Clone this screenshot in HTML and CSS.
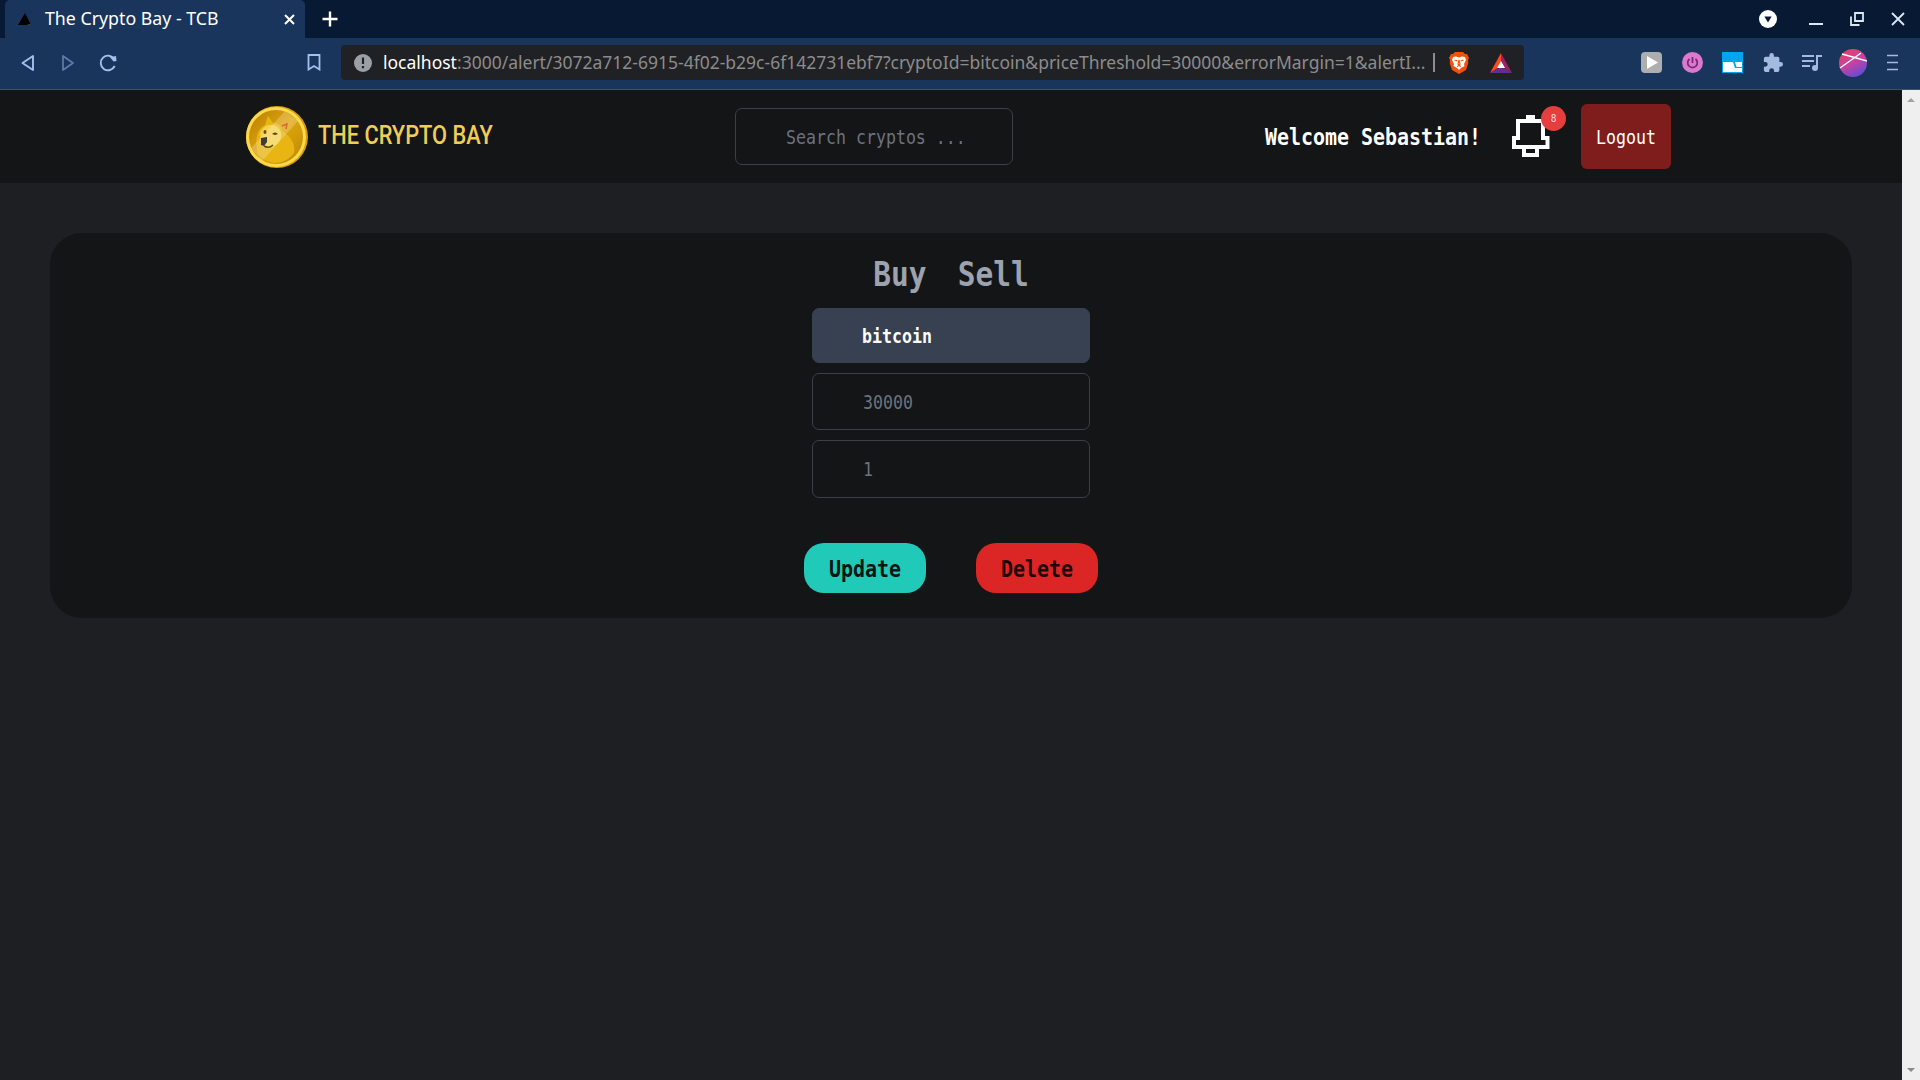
FILE: index.html
```html
<!DOCTYPE html>
<html lang="en">
<head>
<meta charset="utf-8">
<title>The Crypto Bay - TCB</title>
<link rel="stylesheet" href="styles.css">
</head>
<body>
<div class="tabs">
  <div class="tab">
    <svg class="favicon" width="16" height="14" viewBox="0 0 16 14"><path d="M8 1l6 12H1z" fill="#000"/><path d="M12 12l3 1h-5z" fill="#4a4a52"/></svg>
    <span class="tab-title">The Crypto Bay - TCB</span>
    <svg class="close" width="11" height="11" viewBox="0 0 11 11"><path d="M1 1l9 9M10 1l-9 9" stroke="#fff" stroke-width="2"/></svg>
  </div>
  <svg class="plus" width="16" height="16" viewBox="0 0 16 16"><path d="M8 .5v15M.5 8h15" stroke="#fff" stroke-width="2.4"/></svg>
  <div class="window-controls">
    <svg width="18" height="18" viewBox="0 0 18 18"><circle cx="9" cy="9" r="9" fill="#fff"/><path d="M5.3 6.5h7.4L9 12.5z" fill="#081a33"/></svg>
    <svg width="14" height="14" viewBox="0 0 14 14"><path d="M0 12h14" stroke="#dce6f5" stroke-width="2"/></svg>
    <svg width="14" height="14" viewBox="0 0 14 14" fill="none" stroke="#dce6f5" stroke-width="1.8"><path d="M5 1h8v8H5zM1 4.5V13h8.5"/></svg>
    <svg width="14" height="14" viewBox="0 0 14 14"><path d="M1 1l12 12M13 1L1 13" stroke="#dce6f5" stroke-width="1.8"/></svg>
  </div>
</div>
<div class="toolbar">
  <div class="nav">
    <svg width="14" height="18" viewBox="0 0 14 18"><path d="M12 2v14L1.5 9z" fill="none" stroke="#a3c0ee" stroke-width="1.9" stroke-linejoin="round"/></svg>
    <svg width="14" height="18" viewBox="0 0 14 18"><path d="M2 2v14l10-7z" fill="none" stroke="#5f7da8" stroke-width="1.7" stroke-linejoin="round"/></svg>
    <svg width="18" height="18" viewBox="0 0 18 18"><path d="M15.2 5A7.3 7.3 0 1 0 15.7 12" fill="none" stroke="#a3c0ee" stroke-width="1.9"/><path d="M11 3.2l6-1.2.5 5-3 .5z" fill="#a3c0ee"/></svg>
  </div>
  <svg class="bookmark" width="14" height="17" viewBox="0 0 14 17"><path d="M1.5 1h11v14.5L7 12l-5.500 3.500z" fill="none" stroke="#a3c0ee" stroke-width="1.8"/></svg>
  <div class="address">
    <svg width="18" height="18" viewBox="0 0 18 18"><circle cx="9" cy="9" r="9" fill="#9aa0a6"/><path d="M9 3.500v6.500M9 12v2.300" stroke="#202124" stroke-width="2.200"/></svg>
    <span class="url"><b>localhost</b>:3000/alert/3072a712-6915-4f02-b29c-6f142731ebf7?cryptoId=bitcoin&amp;priceThreshold=30000&amp;errorMargin=1&amp;alertI...</span>
    <i class="divider"></i>
    <svg class="shield" width="20" height="22" viewBox="0 0 20 22"><path d="M6 0h8l2 2 2 0 2 4-1 2 .3 3L17 18l-7 4-7-4L.7 11 1 8 0 6l2-4h2z" fill="#f0520b"/><path d="M4 5l3-.5 3 1 3-1 3 .5 1 3-2 4 .5 2-3.500 2L10 18l-2-2-3.500-2 .5-2-2-4z" fill="#fff"/><path d="M5.500 8l3 1M14.500 8l-3 1M10 8l-1 4 1 1 1-1zM8 14.500l2-1 2 1" fill="none" stroke="#f0520b" stroke-width="1.100"/></svg>
    <svg class="bat" width="22" height="20" viewBox="0 0 22 20"><path d="M11 0L0 20l11-7z" fill="#ff4724"/><path d="M11 0l11 20-11-7z" fill="#9e1f63"/><path d="M0 20h22l-11-7z" fill="#662d91"/><path d="M11 8l4 7H7z" fill="#fff"/></svg>
  </div>
  <div class="extensions">
    <svg width="21" height="21" viewBox="0 0 21 21"><rect width="21" height="21" rx="4" fill="#acaeb0"/><path d="M6 4l11 6.500L6 17z" fill="#fff"/></svg>
    <svg width="21" height="21" viewBox="0 0 21 21"><circle cx="10.500" cy="10.500" r="10.500" fill="#dc78d0"/><path d="M7.500 7a4.800 4.800 0 1 0 6 0M10.500 5v6" fill="none" stroke="#74296f" stroke-width="1.700"/></svg>
    <svg width="21" height="21" viewBox="0 0 21 21"><path fill="#00a5f2" d="M0 0h21v21H0z"/><path d="M1 10h10l2 6h7v4H1z" fill="#fff"/><path d="M13 10h7v5h-5.500z" fill="#fff"/></svg>
    <svg width="20" height="20" viewBox="1 1 22 22"><path fill="#a3bbe0" d="M20.500 11H19V7a2 2 0 0 0-2-2h-4V3.500a2.500 2.500 0 0 0-5 0V5H4a2 2 0 0 0-2 2v3.800h1.500a2.700 2.700 0 0 1 0 5.400H2V20a2 2 0 0 0 2 2h3.800v-1.500a2.700 2.700 0 0 1 5.400 0V22H17a2 2 0 0 0 2-2v-4h1.500a2.500 2.500 0 0 0 0-5z"/></svg>
    <svg width="20" height="18" viewBox="0 0 20 18"><path d="M0 2h12M0 7h12M0 12h8" stroke="#a3bbe0" stroke-width="2"/><path d="M15 14V2h5" fill="none" stroke="#a3bbe0" stroke-width="2"/><circle cx="13" cy="14" r="3" fill="#a3bbe0"/></svg>
    <svg width="28" height="28" viewBox="0 0 28 28"><defs><linearGradient id="av" x1=".2" y1="0" x2=".75" y2="1"><stop stop-color="#e5435c"/><stop offset=".5" stop-color="#c840a3"/><stop offset="1" stop-color="#5650d8"/></linearGradient></defs><circle cx="14" cy="14" r="14" fill="url(#av)"/><path d="M1 19L22 4M3 5l25 7" stroke="#fff" stroke-width="1.500"/></svg>
    <svg width="11" height="17" viewBox="0 0 11 17"><path d="M0 1.500h11M0 8.500h11M0 15.500h11" stroke="#a3bbe0" stroke-width="1.700"/></svg>
  </div>
</div>
<div class="viewport">
  <div class="page">
    <header class="header">
      <div class="brand">
        <svg width="62" height="62" viewBox="0 0 62 62"><defs><linearGradient id="coin" x1="0" y1="0" x2="1" y2="1"><stop stop-color="#b87d04"/><stop offset=".5" stop-color="#dca60c"/><stop offset="1" stop-color="#bd8605"/></linearGradient></defs><circle cx="31" cy="31" r="31" fill="#d49c0b"/><circle cx="30" cy="31" r="30" fill="#fbd84c"/><circle cx="30" cy="31" r="27" fill="url(#coin)"/><path d="M12 48c-3-12-2-20 3-26l4-3 3-9 5 7c6 0 8 3 9 8 9 5 14 14 12 22-9 12-25 14-36 1z" fill="#e8b513"/><path d="M14 28c2-8 10-11 16-8 7 4 7 14 0 19-6 5-14 3-15-3z" fill="#f5d24c"/><path d="M5 42L39 5l13 10-36 40z" fill="#fff" opacity=".22"/><path d="M15 32l6-1v5l-3 4-3-1z" fill="#3f3b35"/><path d="M18 40q5 3 9-1" fill="none" stroke="#62460c" stroke-width="1.500"/><ellipse cx="19" cy="26" rx="1.500" ry="2" fill="#6b5114"/><path d="M26 28q3-3 6 0l-3 1z" fill="#5c430f"/><path d="M36 20l5-2-1 5" fill="none" stroke="#d76934" stroke-width="1.500"/></svg>
        <span class="wordmark">THE CRYPTO BAY</span>
      </div>
      <div class="field search"><span class="px">Search cryptos ...</span></div>
      <div class="account">
        <span class="px welcome">Welcome Sebastian!</span>
        <div class="alerts">
          <svg width="38" height="42" viewBox="0 0 38 42"><path fill="#fff" fill-rule="evenodd" d="M14 0h9v4h10v17h4.500v13H27v8H10v-8H0V21h4V4h10zM8 8v17H4v5h29.500v-5H29V8zM14 34v4h9v-4z"/></svg>
          <span class="badge"><span class="px">8</span></span>
        </div>
        <div class="logout"><span class="px">Logout</span></div>
      </div>
    </header>
    <main class="card">
      <div class="modes"><span class="px">Buy</span><span class="px">Sell</span></div>
      <div class="form">
        <div class="field coin"><span class="px">bitcoin</span></div>
        <div class="field"><span class="px">30000</span></div>
        <div class="field last"><span class="px">1</span></div>
      </div>
      <div class="actions">
        <div class="btn update"><span class="px">Update</span></div>
        <div class="btn delete"><span class="px">Delete</span></div>
      </div>
    </main>
  </div>
  <div class="scrollbar">
    <svg width="8" height="4" viewBox="0 0 8 4"><path d="M4 0l4 4H0z" fill="#a3a3a3"/></svg>
    <svg width="8" height="4" viewBox="0 0 8 4"><path d="M4 4l4-4H0z" fill="#8a8a8a"/></svg>
  </div>
</div>
</body>
</html>
```
FILE: styles.css
```css
* { box-sizing: border-box; }
body { margin: 0; width: 1920px; height: 1080px; overflow: hidden; display: flex; flex-direction: column; background: #1e1f22; font-family: "Noto Sans", sans-serif; }
svg { display: block; flex: none; }
.tabs { height: 38px; background: #081a33; display: flex; align-items: center; padding-left: 5px; flex: none; }
.tab { width: 300px; height: 38px; background: #1a355c; border-radius: 5px 5px 0 0; display: flex; align-items: center; padding: 0 10px 0 12px; }
.tab-title { margin-left: 12px; color: #fff; font-size: 17.750px; line-height: 36px; margin-top: -2px; white-space: nowrap; }
.close { margin-left: auto; }
.plus { margin-left: 17px; }
.window-controls { margin-left: auto; display: flex; align-items: center; padding-right: 15px; }
.window-controls svg { margin-left: 27px; }
.window-controls svg:nth-child(2) { margin-left: 32px; }
.toolbar { height: 52px; background: #1a355c; border-bottom: 1px solid #3a5661; display: flex; align-items: center; padding: 0 22px 2px 21px; flex: none; }
.nav { display: flex; gap: 26px; align-items: center; }
.nav svg:last-child { margin-left: -2px; }
.bookmark { margin-left: 190px; }
.address { margin-left: 20px; width: 1183px; height: 35px; border-radius: 4px; background: #202124; display: flex; align-items: center; padding-left: 13px; }
.url { margin-left: 11px; width: 1043px; color: #8c8c8c; font-size: 17.510px; line-height: 35px; white-space: nowrap; }
.url b { color: #fff; font-weight: 400; }
.divider { width: 1.5px; height: 19px; background: #8c8c8c; margin-left: 7px; }
.shield { margin-left: 14px; }
.bat { margin-left: 21px; }
.extensions { margin-left: auto; display: flex; align-items: center; gap: 19.500px; }
.extensions svg:nth-child(6) { margin-left: -3px; }
.extensions svg:nth-child(7) { margin-left: 1px; }
.viewport { flex: 1; display: flex; }
.page { width: 1902px; }
.scrollbar { width: 18px; background: #efefef; display: flex; flex-direction: column; justify-content: space-between; align-items: center; padding: 8px 0; }
.header { height: 93px; background: #141516; display: grid; grid-template-columns: 489px 278px 1fr; align-items: center; padding: 0 231px 0 246px; }
.brand { display: flex; align-items: center; gap: 10px; }
.wordmark { color: #f0cd55; font-family: Roboto, sans-serif; font-weight: 500; font-size: 22px; line-height: 26px; width: 175px; white-space: nowrap; transform: scale(.99, 1.14); transform-origin: left center; margin-top: -2px; }
/* tall terminal lettering */
.px { display: inline-block; font-family: "DejaVu Sans Mono", monospace; white-space: nowrap; font-size: 16.6px; line-height: 20px; margin-top: 2px; transform: scaleY(1.15); }
.field { width: 278px; height: 57px; border: 1px solid #3c3f45; border-radius: 7px; display: flex; align-items: center; padding-left: 50px; color: #6b7280; }
.account { display: flex; align-items: center; color: #fff; justify-content: flex-end; }
.welcome { font-size: 19.950px; font-weight: 700; margin-top: 1px; }
.alerts { position: relative; margin: -2px 31px 0; }
.badge { position: absolute; left: 29px; top: -9px; width: 25px; height: 25px; border-radius: 50%; background: #e53e3e; display: flex; align-items: center; justify-content: center; }
.badge .px { font-size: 9.500px; line-height: 10px; margin-top: 1px; color: #fbd5d5; }
.logout { width: 90px; height: 65px; border-radius: 6px; background: #7f1d1d; display: flex; align-items: center; justify-content: center; }
.card { margin: 50px 50px 0; width: 1802px; height: 385px; border-radius: 32px; background: #141516; display: flex; flex-direction: column; align-items: center; }
.modes { height: 75px; display: flex; gap: 31px; padding-top: 23px; color: #9ca3af; }
.modes .px { font-size: 29.500px; line-height: 36px; font-weight: 700; }
.form { display: flex; flex-direction: column; gap: 10px; }
.form .last { height: 58px; }
.form .coin { height: 55px; background: #384152; border-color: #384152; color: #fff; font-weight: 700; padding-left: 49px; }
.actions { display: flex; gap: 50px; margin-top: 45px; }
.btn { width: 122px; height: 50px; border-radius: 20px; display: flex; align-items: center; justify-content: center; }
.btn .px { font-size: 20px; font-weight: 700; }
.update { background: #20c9b8; color: #041512; }
.delete { background: #dc2626; color: #1c0505; }
```
